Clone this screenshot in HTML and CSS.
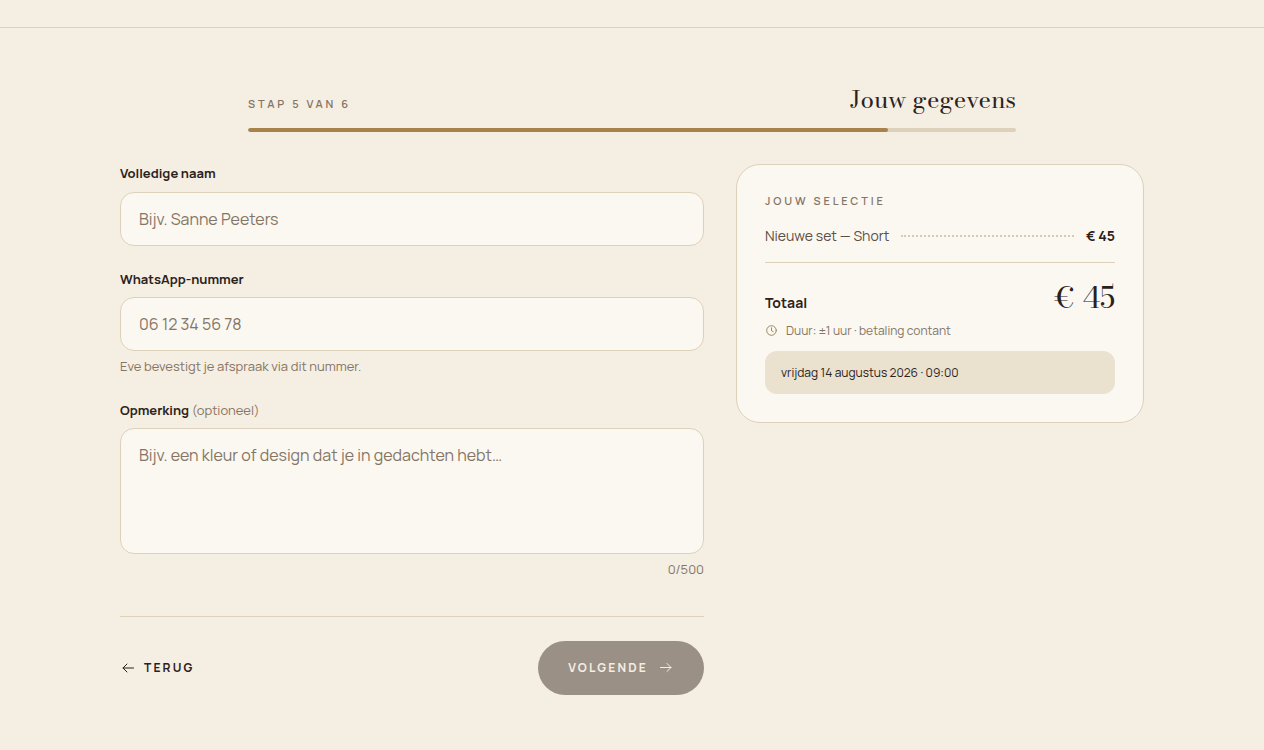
FILE: index.html
```html
<!DOCTYPE html>
<html lang="nl">
<head>
  <meta charset="UTF-8" />
  <meta name="viewport" content="width=device-width, initial-scale=1.0"/>
  <title>Jouw gegevens</title>
  <link rel="stylesheet" href="styles.css">
</head>
<body>
  <header class="site-header"></header>

  <main class="booking">
    <div class="progress">
      <div class="progress-head">
        <span class="eyebrow">Stap 5 van 6</span>
        <h1>Jouw gegevens</h1>
      </div>
      <div class="track"><div class="track-fill"></div></div>
    </div>

    <div class="columns">
      <form class="details">
        <div class="field">
          <label for="name">Volledige naam</label>
          <input type="text" id="name" placeholder="Bijv. Sanne Peeters" />
        </div>

        <div class="field">
          <label for="phone">WhatsApp-nummer</label>
          <input type="tel" id="phone" placeholder="06 12 34 56 78" />
          <p class="hint">Eve bevestigt je afspraak via dit nummer.</p>
        </div>

        <div class="field">
          <label for="note">Opmerking <span class="optional">(optioneel)</span></label>
          <textarea id="note" maxlength="500" placeholder="Bijv. een kleur of design dat je in gedachten hebt…"></textarea>
          <p class="hint counter">0/500</p>
        </div>

        <div class="actions">
          <button type="button" class="btn-back">
            <svg width="16" height="16" viewBox="0 0 16 16" fill="none" stroke="currentColor" stroke-linecap="round" stroke-linejoin="round"><path d="M13.5 8H3M7 4L3 8l4 4"/></svg>
            Terug
          </button>
          <button type="submit" class="btn-next" disabled>
            Volgende
            <svg width="16" height="16" viewBox="0 0 16 16" fill="none" stroke="currentColor" stroke-linecap="round" stroke-linejoin="round"><path d="M2.5 7.5H13M9 3.5l4 4l-4 4"/></svg>
          </button>
        </div>
      </form>

      <aside class="summary">
        <h2 class="eyebrow">Jouw selectie</h2>
        <div class="line-item">
          <span>Nieuwe set — Short</span>
          <span class="dots"></span>
          <strong>€ 45</strong>
        </div>
        <div class="total">
          <strong>Totaal</strong>
          <span class="amount">€ 45</span>
        </div>
        <p class="duration">
          <svg width="13" height="13" viewBox="0 0 13 13" fill="none" stroke="#a08562" stroke-linecap="round" stroke-linejoin="round"><circle cx="6.5" cy="6.5" r="4.8"/><path d="M6.5 3.8v2.9l1.7 1"/></svg>
          Duur: ±1 uur · betaling contant
        </p>
        <p class="slot">vrijdag 14 augustus 2026 · 09:00</p>
      </aside>
    </div>
  </main>
</body>
</html>
```
FILE: styles.css
```css
* {
  margin: 0;
  padding: 0;
  box-sizing: border-box;
}
body {
  font-family: 'Manrope', 'Inter', sans-serif;
  font-size: 14px;
  line-height: 1.5;
  background: #f5eee2;
  color: #2b211c;
  -webkit-font-smoothing: antialiased;
}
input,
textarea,
button {
  font-family: inherit;
}
.site-header {
  height: 28px;
  border-bottom: 1px solid #ddd1bb;
}
.booking {
  max-width: 1072px;
  margin: 0 auto;
  padding: 54px 24px;
}

/* progress */
.progress {
  max-width: 768px;
  margin: 0 auto 32px;
}
.progress-head {
  display: flex;
  justify-content: space-between;
  align-items: baseline;
  margin-bottom: 10px;
}
.eyebrow {
  font-size: 11px;
  font-weight: 600;
  letter-spacing: 0.26em;
  text-transform: uppercase;
  color: #857565;
}
h1 {
  font-family: 'Bodoni Moda', 'Liberation Serif', serif;
  font-size: 24px;
  line-height: 36px;
  font-weight: 400;
}
.track {
  height: 4px;
  border-radius: 2px;
  background: #ddd1bb;
  overflow: hidden;
}
.track-fill {
  width: 83.33%;
  height: 100%;
  border-radius: 2px;
  background: #a8824a;
}

/* form */
.columns {
  display: grid;
  grid-template-columns: minmax(0, 1fr) 408px;
  align-items: start;
  gap: 32px;
}
.field {
  margin-bottom: 24px;
}
.field label {
  display: block;
  margin-bottom: 8px;
  font-size: 13px;
  font-weight: 700;
}
.field .optional {
  font-weight: 400;
  color: #857565;
}
.field input,
.field textarea {
  display: block;
  width: 100%;
  height: 54px;
  padding: 0 18px;
  border: 1px solid #ddd1bb;
  border-radius: 14px;
  background: #fbf8f1;
  color: #2b211c;
  font-size: 16px;
}
.field textarea {
  height: 126px;
  padding: 14px 18px;
  line-height: 24px;
  resize: none;
}
.field input::placeholder,
.field textarea::placeholder {
  color: #857565;
}
.hint {
  margin-top: 6px;
  font-size: 13px;
  color: #857565;
}
.counter {
  text-align: right;
}
.actions {
  display: flex;
  justify-content: space-between;
  align-items: center;
  margin-top: 36px;
  padding-top: 24px;
  border-top: 1px solid #ddd1bb;
}
.actions button {
  display: flex;
  align-items: center;
  gap: 8px;
  border: none;
  font-size: 12px;
  font-weight: 700;
  letter-spacing: 0.18em;
  text-transform: uppercase;
}
.btn-back {
  background: none;
  color: #2b211c;
  cursor: pointer;
}
.actions .btn-next {
  gap: 10px;
  height: 54px;
  padding: 0 30px;
  border-radius: 27px;
  background: #9a9086;
  color: #f5eee2;
}

/* summary card */
.summary {
  padding: 28px;
  border: 1px solid #ddd1bb;
  border-radius: 24px;
  background: #fbf8f1;
}
.line-item {
  display: flex;
  align-items: center;
  gap: 12px;
  margin-top: 16px;
  padding-bottom: 16px;
  border-bottom: 1px solid #ddd1bb;
  line-height: 20px;
  color: #5c4f45;
}
.dots {
  flex: 1;
  border-top: 2px dotted #d8c8b4;
}
strong {
  font-weight: 700;
  color: #2b211c;
}
.total {
  display: flex;
  justify-content: space-between;
  align-items: baseline;
  margin-top: 15px;
}
.amount {
  font-family: 'Bodoni Moda', 'Liberation Serif', serif;
  font-size: 30px;
  line-height: 39px;
}
.duration {
  display: flex;
  align-items: center;
  gap: 8px;
  margin-top: 4px;
  font-size: 12px;
  line-height: 20px;
  color: #857565;
}
.slot {
  margin-top: 10px;
  padding: 12px 16px;
  border-radius: 12px;
  background: #eae1cf;
  font-size: 12px;
  line-height: 19px;
}
```
